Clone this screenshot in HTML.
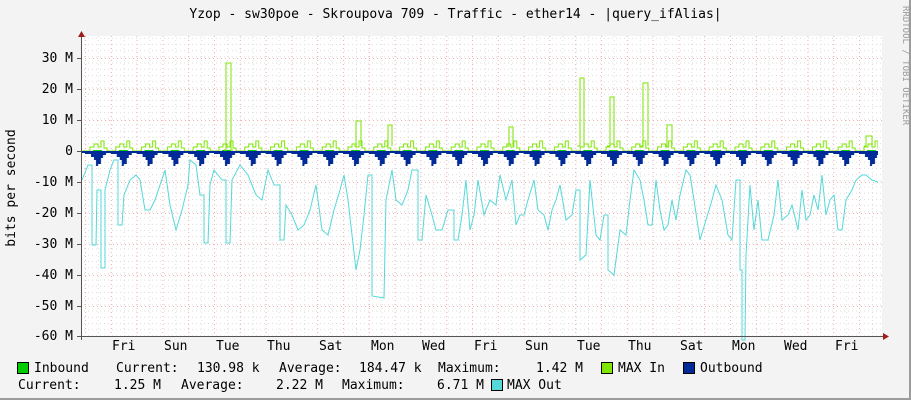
<!DOCTYPE html>
<html><head><meta charset="utf-8"><style>
html,body{margin:0;padding:0}
body{width:911px;height:400px;background:#f3f3f3;position:relative;overflow:hidden;font-family:"DejaVu Sans Mono","Liberation Mono",monospace;color:#000}
.t{position:absolute;font-size:13px;line-height:15px;white-space:pre}
.b{position:absolute;width:10px;height:10px;border:1px solid #000}
</style></head><body>
<div style="position:absolute;left:0;top:0;width:909px;height:398px;border-right:2px solid #9c9c9c;border-bottom:2px solid #9c9c9c"></div>
<svg width="911" height="400" style="position:absolute;left:0;top:0">
<defs>
<pattern id="mh" patternUnits="userSpaceOnUse" x="0" y="0.6" width="20" height="6.2"><line x1="0" y1="0.5" x2="20" y2="0.5" stroke="#dcdcdc" stroke-dasharray="1,3"/></pattern>
<pattern id="mv" patternUnits="userSpaceOnUse" x="85" y="0" width="12.9" height="20"><line x1="0.5" y1="0" x2="0.5" y2="20" stroke="#dcdcdc" stroke-dasharray="1,3"/></pattern>
<pattern id="mj" patternUnits="userSpaceOnUse" x="85" y="0" width="25.8" height="20"><line x1="0.5" y1="0" x2="0.5" y2="20" stroke="#f3b0b0" stroke-dasharray="1,3"/></pattern>
<pattern id="blue" patternUnits="userSpaceOnUse" x="85" y="0" width="25.8" height="400">
<path d="M0 151 H25.8 V153 H21 V155 H18 V158 H16 V164 H13 V166 H11 V160 H9 V157 H6 V154 H0Z" fill="#002a97"/>
<path d="M8 151 V150 H17 V151Z" fill="#00cc00"/>
</pattern>
<pattern id="grn" patternUnits="userSpaceOnUse" x="85" y="0" width="25.8" height="400">
<polyline fill="none" stroke="#7ee600" stroke-width="1" points="0,151 5,151 5,147 9,147 9,144 13,144 13,147 16,147 16,141 19,141 19,148 22,148 22,151 25.8,151"/>
</pattern>
</defs>
<rect x="81" y="36" width="801" height="300" fill="#fff"/>
<rect x="81" y="36" width="801" height="300" fill="url(#mh)"/>
<rect x="81" y="36" width="801" height="300" fill="url(#mv)"/>
<rect x="81" y="36" width="801" height="300" fill="url(#mj)"/>
<g stroke="#f3b0b0" stroke-dasharray="1,3">
<line x1="81" x2="882" y1="58.5" y2="58.5"/><line x1="81" x2="882" y1="89.5" y2="89.5"/><line x1="81" x2="882" y1="120.5" y2="120.5"/><line x1="81" x2="882" y1="182.5" y2="182.5"/><line x1="81" x2="882" y1="213.5" y2="213.5"/><line x1="81" x2="882" y1="244.5" y2="244.5"/><line x1="81" x2="882" y1="275.5" y2="275.5"/><line x1="81" x2="882" y1="306.5" y2="306.5"/>
</g>
<rect x="82" y="100" width="796" height="236" fill="url(#blue)"/>
<rect x="82" y="120" width="796" height="40" fill="url(#grn)"/>
<g fill="none" stroke="#7ee600">
<polyline points="224,150 226,150 226,63 231,63 231,150 233,150"/>
<polyline points="354,146 356,146 356,121 361,121 361,146"/>
<polyline points="386,146 388,146 388,125 392,125 392,146"/>
<polyline points="507,146 509,146 509,127 513,127 513,146"/>
<polyline points="577,146 580,146 580,78 584,78 584,146"/>
<polyline points="607,146 610,146 610,97 614,97 614,146"/>
<polyline points="640,146 643,146 643,83 648,83 648,146"/>
<polyline points="665,146 667,146 667,125 672,125 672,146"/>
<polyline points="864,146 866,146 866,136 872,136 872,146"/>
</g>
<polyline fill="none" stroke="#55d8d8" points="82,180 88,165 92,165 92,245 96,245 97,190 101,190 101,268 105,268 105,190 110,170 114,160 118,160 118,225 122,225 124,195 130,180 136,175 140,180 145,210 150,210 155,200 160,185 165,170 170,205 176,230 182,210 188,185 190,160 196,165 200,195 204,195 204,243 208,243 210,185 214,170 218,175 222,180 226,180 226,243 230,243 232,180 240,165 248,175 256,195 262,200 268,170 274,185 280,185 280,240 284,240 286,205 292,215 298,230 304,225 310,210 316,185 322,230 328,235 334,210 340,190 344,175 348,200 352,235 356,270 360,250 364,215 368,175 372,175 372,296 384,298 386,200 392,170 396,200 402,205 408,190 412,170 418,170 418,240 422,240 426,195 432,215 436,230 442,230 448,210 454,210 454,240 458,240 462,215 466,180 470,230 474,215 478,180 484,215 490,200 496,205 500,175 506,200 512,180 516,225 520,215 524,215 528,200 534,180 538,210 544,215 548,230 552,210 556,200 560,185 566,220 572,215 576,190 580,190 580,260 586,255 590,180 596,235 600,240 604,215 608,215 608,270 614,275 620,230 626,235 630,200 634,170 640,180 644,200 648,225 652,225 656,180 660,210 664,230 668,225 672,200 676,220 680,195 686,170 690,175 694,200 700,240 706,220 712,200 716,185 722,200 728,235 732,240 736,180 740,180 740,270 742,270 742,340 745,340 746,255 750,185 754,230 758,200 762,240 768,240 774,215 778,180 782,220 788,215 792,205 798,230 802,190 806,220 810,215 814,195 818,210 822,175 826,215 830,200 834,195 838,230 842,230 846,200 852,190 856,180 862,175 866,175 872,180 878,182"/>
<line x1="81" x2="878" y1="151.5" y2="151.5" stroke="#002a97" stroke-width="1"/>
<line x1="81.5" y1="36" x2="81.5" y2="340" stroke="#555"/>
<line x1="77" y1="336.5" x2="884" y2="336.5" stroke="#555"/>
<path d="M78 37 L81.5 31 L85 37Z" fill="#a01c1c"/>
<path d="M883 333 L889 336.5 L883 340Z" fill="#a01c1c"/>
<g stroke="#555"><line x1="77" x2="81" y1="58.5" y2="58.5"/><line x1="77" x2="81" y1="89.5" y2="89.5"/><line x1="77" x2="81" y1="120.5" y2="120.5"/><line x1="77" x2="81" y1="151.5" y2="151.5"/><line x1="77" x2="81" y1="182.5" y2="182.5"/><line x1="77" x2="81" y1="213.5" y2="213.5"/><line x1="77" x2="81" y1="244.5" y2="244.5"/><line x1="77" x2="81" y1="275.5" y2="275.5"/><line x1="77" x2="81" y1="306.5" y2="306.5"/></g>
<text x="15" y="188" transform="rotate(-90 15 188)" text-anchor="middle" font-family="DejaVu Sans Mono, Liberation Mono, monospace" font-size="13">bits per second</text>
<text x="903" y="6" transform="rotate(90 903 6)" font-family="DejaVu Sans Mono, Liberation Mono, monospace" font-size="9" fill="#999">RRDTOOL / TOBI OETIKER</text>
</svg>
<div class="t" style="left:0;width:911px;text-align:center;top:7px">Yzop - sw30poe - Skroupova 709 - Traffic - ether14 - |query_ifAlias|</div>
<div class="t" style="left:0;width:73px;text-align:right;top:51px">30 M</div>
<div class="t" style="left:0;width:73px;text-align:right;top:82px">20 M</div>
<div class="t" style="left:0;width:73px;text-align:right;top:113px">10 M</div>
<div class="t" style="left:0;width:73px;text-align:right;top:144px">0</div>
<div class="t" style="left:0;width:73px;text-align:right;top:175px">-10 M</div>
<div class="t" style="left:0;width:73px;text-align:right;top:206px">-20 M</div>
<div class="t" style="left:0;width:73px;text-align:right;top:237px">-30 M</div>
<div class="t" style="left:0;width:73px;text-align:right;top:268px">-40 M</div>
<div class="t" style="left:0;width:73px;text-align:right;top:299px">-50 M</div>
<div class="t" style="left:0;width:73px;text-align:right;top:329px">-60 M</div>
<div class="t" style="left:112px;top:339px">Fri</div>
<div class="t" style="left:164px;top:339px">Sun</div>
<div class="t" style="left:216px;top:339px">Tue</div>
<div class="t" style="left:267px;top:339px">Thu</div>
<div class="t" style="left:319px;top:339px">Sat</div>
<div class="t" style="left:371px;top:339px">Mon</div>
<div class="t" style="left:422px;top:339px">Wed</div>
<div class="t" style="left:474px;top:339px">Fri</div>
<div class="t" style="left:525px;top:339px">Sun</div>
<div class="t" style="left:577px;top:339px">Tue</div>
<div class="t" style="left:628px;top:339px">Thu</div>
<div class="t" style="left:680px;top:339px">Sat</div>
<div class="t" style="left:732px;top:339px">Mon</div>
<div class="t" style="left:784px;top:339px">Wed</div>
<div class="t" style="left:835px;top:339px">Fri</div>
<div class="b" style="left:17px;top:362px;background:#00cc00"></div>
<div class="t" style="left:34px;top:361px">Inbound</div>
<div class="t" style="left:116px;top:361px">Current:</div>
<div class="t" style="left:197px;top:361px">130.98 k</div>
<div class="t" style="left:279px;top:361px">Average:</div>
<div class="t" style="left:359px;top:361px">184.47 k</div>
<div class="t" style="left:438px;top:361px">Maximum:</div>
<div class="t" style="left:536px;top:361px">1.42 M</div>
<div class="b" style="left:601px;top:362px;background:#7ee600"></div>
<div class="t" style="left:618px;top:361px">MAX In</div>
<div class="b" style="left:683px;top:362px;background:#002a97"></div>
<div class="t" style="left:700px;top:361px">Outbound</div>
<div class="t" style="left:18px;top:378px">Current:</div>
<div class="t" style="left:114px;top:378px">1.25 M</div>
<div class="t" style="left:181px;top:378px">Average:</div>
<div class="t" style="left:276px;top:378px">2.22 M</div>
<div class="t" style="left:342px;top:378px">Maximum:</div>
<div class="t" style="left:437px;top:378px">6.71 M</div>
<div class="b" style="left:491px;top:379px;background:#55d8d8"></div>
<div class="t" style="left:507px;top:378px">MAX Out</div>
</body></html>
